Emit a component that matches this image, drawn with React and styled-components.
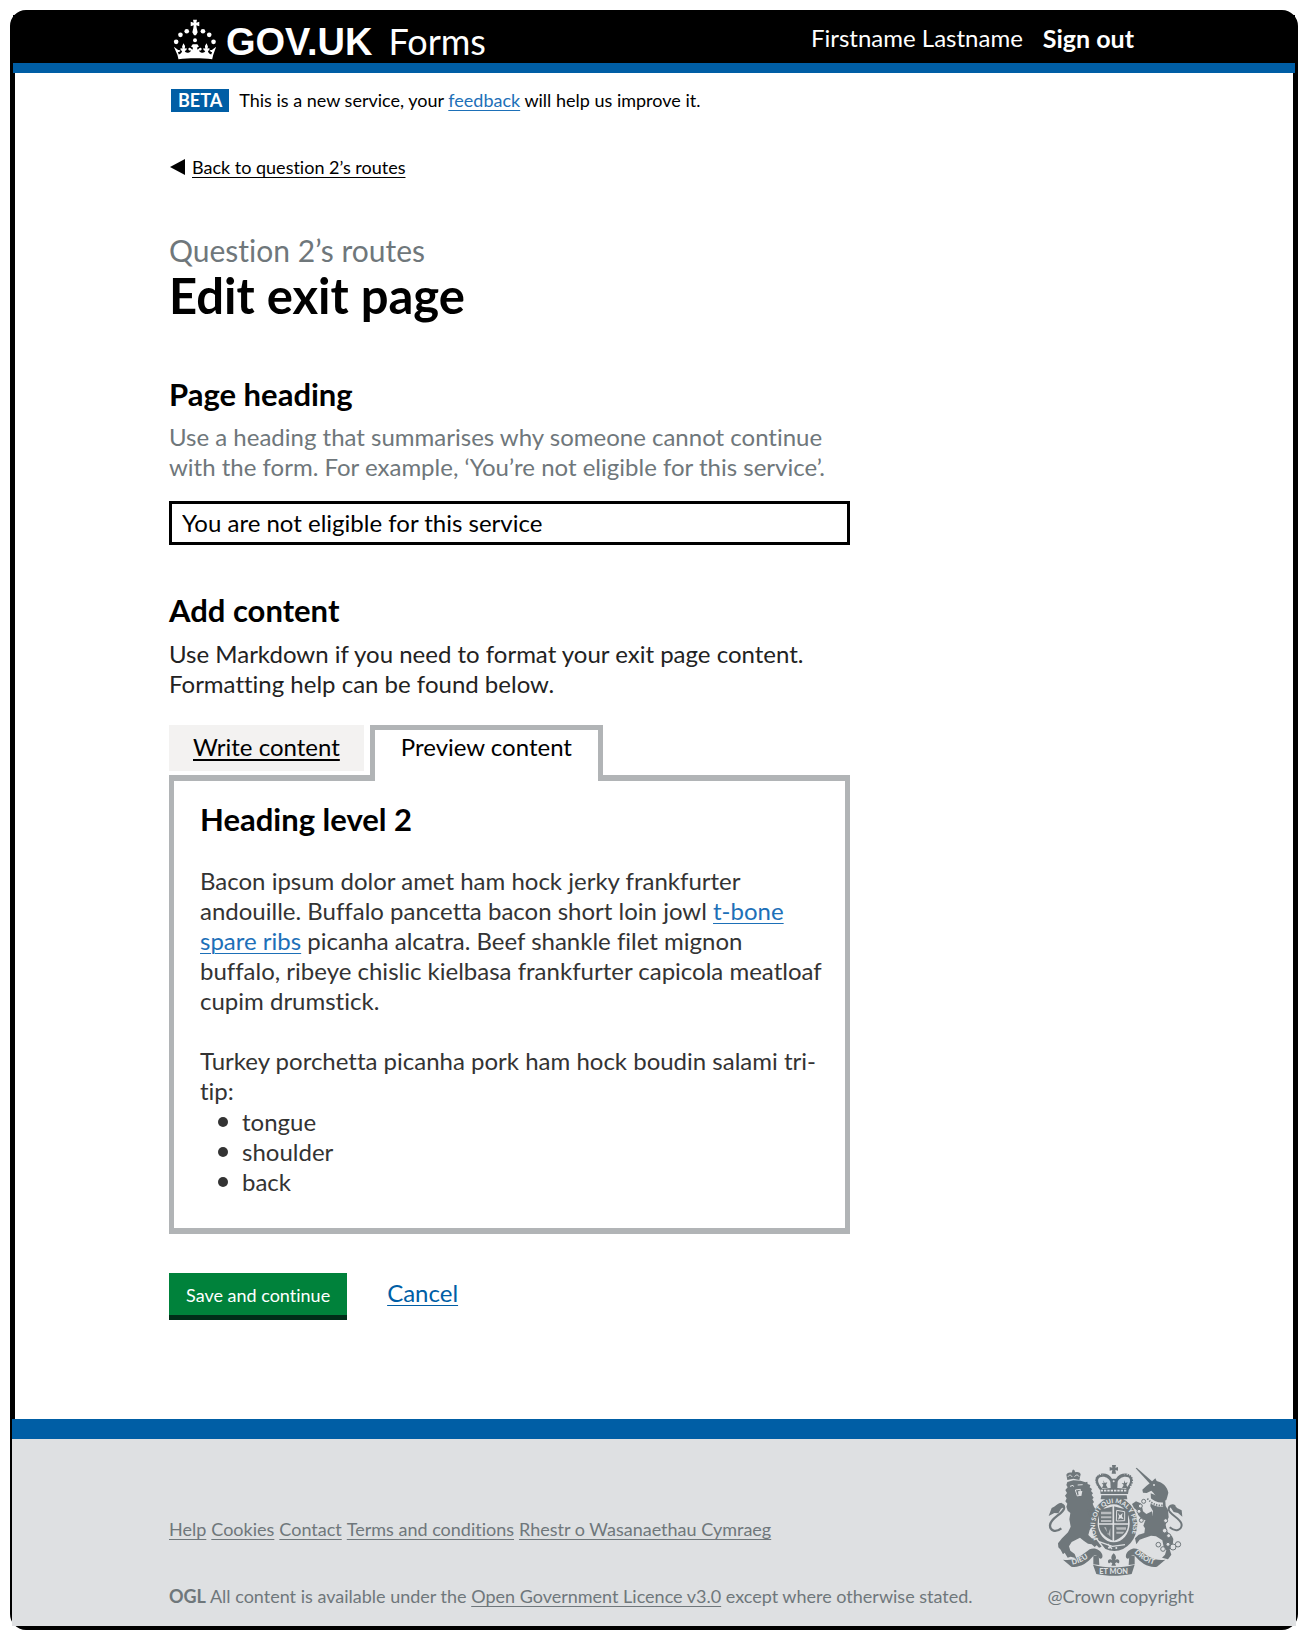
import React, { useState } from "react";
import styled, { createGlobalStyle } from "styled-components";

const GlobalStyle = createGlobalStyle`
  * { box-sizing: border-box; }
  body {
    margin: 0;
    background: #fff;
    color: #000;
    font-family: Lato, "Open Sans", "Liberation Sans", sans-serif;
    font-size: 24px;
    line-height: 30px;
    font-variant-ligatures: none;
  }
  h1, h2, p, ul { margin: 0; padding: 0; }
`;

const Frame = styled.div`
  margin: 10px 10px 11px;
  border: 5px solid #000;
  border-bottom-width: 4px;
  border-radius: 16px;
`;

const Container = styled.div`
  width: 100%;
  max-width: 970px;
  margin: 0 auto;
`;

const Header = styled.header`
  margin: 0 -2px;
  background: #000;
  border-bottom: 10px solid #005ea5;
  color: #fff;
`;

const HeaderRow = styled(Container)`
  display: flex;
  align-items: center;
  justify-content: space-between;
  height: 48px;
  padding: 0 5px 0 4px;
`;

const Brand = styled.a`
  display: flex;
  align-items: center;
  gap: 9px;
  color: inherit;
  text-decoration: none;
`;

const Crown = styled.svg`
  width: 44px;
  height: 41px;
`;

const BrandName = styled.span`
  display: flex;
  align-items: baseline;
  gap: 16px;
  padding-top: 5px;
`;

const Wordmark = styled.span`
  font: bold 38px/42px "Liberation Sans", Arial, sans-serif;
`;

const Product = styled.span`
  font-size: 36px;
  line-height: 42px;
`;

const Account = styled.nav`
  display: flex;
  gap: 20px;
  padding-bottom: 3px;
`;

const SignOut = styled.a`
  color: #fff;
  font-size: 25px;
  font-weight: 700;
  text-decoration: none;
`;

const PhaseBanner = styled.div`
  display: flex;
  gap: 10px;
  padding: 16px 0 0 2px;
  font-size: 18px;
  line-height: 23px;
`;

const PhaseTag = styled.strong`
  padding: 0 7px;
  background: #005ea5;
  color: #fff;
`;

const Link = styled.a`
  color: ${(p) => p.$color || "#1d70b8"};
  text-decoration: underline;
  text-decoration-thickness: 1px;
  text-underline-offset: 3px;
`;

const BackRow = styled.div`
  display: flex;
  align-items: center;
  gap: 6px;
  margin-top: 45px;
  padding-left: 1px;
  font-size: 18px;
  line-height: 20px;
`;

const BackArrow = styled.svg`
  width: 16px;
  height: 16px;
`;

const Main = styled.main`
  width: 100%;
  max-width: 681px;
  padding: 55px 0 99px;
`;

const Caption = styled.p`
  color: #6f777b;
  font-size: 30px;
  line-height: 36px;
`;

const Title = styled.h1`
  font-size: 49px;
  line-height: 54px;
`;

const SectionHeading = styled.h2`
  margin-top: ${(p) => p.$top}px;
  font-size: 31px;
  line-height: 36px;
`;

const Paragraph = styled.p`
  margin-top: ${(p) => p.$top}px;
  color: ${(p) => p.$color};
`;

const TextInput = styled.input`
  display: block;
  width: 100%;
  height: 44px;
  margin-top: 19px;
  padding: 0 10px 2px;
  border: 3px solid #000;
  border-radius: 0;
  color: #000;
  font: inherit;
`;

const TabList = styled.div`
  display: flex;
  gap: 6px;
  height: 50px;
  margin-top: 26px;
`;

const Tab = styled.button`
  position: relative;
  height: ${(p) => (p.$selected ? 56 : 46)}px;
  padding: ${(p) => (p.$selected ? "2px 26px 19px" : "2px 19px 4px")};
  border: 5px solid ${(p) => (p.$selected ? "#b1b4b6" : "#f3f2f1")};
  ${(p) => p.$selected && "border-bottom: 0;"}
  background: ${(p) => (p.$selected ? "#fff" : "#f3f2f1")};
  color: #000;
  font: inherit;
  white-space: nowrap;
  text-decoration: ${(p) => (p.$selected ? "none" : "underline")};
  text-decoration-thickness: 2px;
  text-underline-offset: 3px;
  cursor: pointer;
`;

const Panel = styled.section`
  padding: 20px 20px 31px 26px;
  border: 5px solid #b1b4b6;
  border-width: 6px 5px;
  color: #333;
`;

const PanelHeading = styled(SectionHeading)`
  color: #000;
`;

const BulletList = styled.ul`
  padding-top: 1px;
  list-style: none;
`;

const Bullet = styled.li`
  display: flex;
  align-items: center;
  gap: 14px;
  padding-left: 18px;
  &::before {
    content: "";
    width: 10px;
    height: 10px;
    border-radius: 50%;
    background: #333;
  }
`;

const Actions = styled.div`
  display: flex;
  align-items: baseline;
  gap: 40px;
  margin-top: 39px;
`;

const SaveButton = styled.button`
  height: 47px;
  padding: 2px 17px 0;
  border: 0;
  border-bottom: 5px solid #002d18;
  background: #00823b;
  color: #fff;
  font: inherit;
  font-size: 18px;
  cursor: pointer;
`;

const Footer = styled.footer`
  display: flex;
  align-items: flex-end;
  justify-content: space-between;
  margin: 0 -3px;
  padding: 26px 102px 20px 157px;
  border-top: 20px solid #005ea5;
  background: #dee0e2;
  color: #6f777b;
  font-size: 18px;
  line-height: 20px;
`;

const FooterText = styled.div`
  display: grid;
  gap: 47px;
`;

const FooterLinks = styled.nav`
  display: flex;
  flex-wrap: wrap;
  gap: 5px;
`;

const Copyright = styled.div`
  display: grid;
  gap: 10px;
`;

const Crest = styled.svg`
  width: 135px;
  height: 111px;
`;

const GREY = "#6f777b";

function CrownLogo() {
  return (
    <Crown viewBox="519 52 132 124" fill="#fff" aria-hidden="true">
      <path d="M579 54h12l-2 9 9-3v14l-9-3 1 8 3 13-5 9h-6l-5-9 3-13 1-8-9 3V60l9 3z" />
      <circle cx="528" cy="121" r="7" />
      <circle cx="541" cy="100" r="7" />
      <circle cx="560" cy="89" r="7" />
      <circle cx="609" cy="89" r="7" />
      <circle cx="628" cy="100" r="7" />
      <circle cx="641" cy="121" r="7" />
      <circle cx="585" cy="116" r="6" />
      <path d="M521 136l13 10c3-1 5-1 7 2-2 4-5 4-8 3l3 8c5-1 9-5 10-10-5-1-6-5-4-9l5 2-1-7 4-10 5 9-1 8 5-2c2 5 0 8-5 9 2 5 7 6 13 4 3-1 5-3 6-6-5 2-9-1-8-5s5-4 8-1l4 4 2-6-6-4 5-7h14l5 7-6 4 2 6 4-4c3-3 7-3 8 1s-3 7-8 5c1 3 3 5 6 6 6 2 11 1 13-4-5-1-7-4-5-9l5 2-1-8 5-9 4 10-1 7 5-2c2 4 1 8-4 9 1 5 5 9 10 10l3-8c-3 1-6 1-8-3 2-3 4-3 7-2l13-10-9 25-3 13c-32-4-70-4-102 0l-3-13z" />
    </Crown>
  );
}

function RoyalArms() {
  return (
    <Crest viewBox="54 45 405 333" fill={GREY} role="img" aria-label="Royal coat of arms">
      {/* lion */}
      <path d="M112 90l-3-16c3-6 10-8 15-6l6-7 7 6c6-2 13 0 15 6l-4 17-18-4z" />
      <path d="M130 59v9M126 63h9" stroke={GREY} strokeWidth="3" />
      <path d="M114 80c3-6 10-6 12 1M134 80c3-7 11-6 13 0" stroke="#dee0e2" strokeWidth="3" fill="none" />
      <path d="M112 96l18-5 22 1 14 5 6-2 1 7 8 3-2 7 7 5-3 6 6 7-4 5 6 8-4 5 5 8-4 5 3 8 10 17 10 15-8 14-7-3-8 16-9 12-4 15 10 10 13 3 11 9 6 13-8 3-7-7-6 5-9-8-11-2-13-9-11-9-9 5-16 8-8 13 4 13 13 10 5 13-17-5-9 3-9-15-5 5-7-14-7-7-1-12 12-15 18-18 8-17-4-22 3-19-8-7-4-12 3-9-6-7 4-9-5-8 6-8-5-9 7-8-4-7z" />
      <path d="M120 109l9-3 2 4M143 105l15-1M136 120l15-2-2 18-7 2z" stroke="#dee0e2" strokeWidth="3" fill="none" />
      <path d="M144 124l13-1-3 15-8-1z" fill="#dee0e2" />
      <path d="M94 235c-18 14-34 7-34-9 0-21 38-34 42-50 2-11-8-16-18-10" stroke={GREY} strokeWidth="7" fill="none" />
      <path d="M94 158c-12 2-18 11-29 16l-9 24 17-9 12 1 8-14 10-6z" />
      <path d="M172 178l24 16 10 18-12 9-12-14z" />
      {/* central crown */}
      <path d="M246 45h12l-2 8 8-2v11l-8-2 2 11h-13l2-11-8 2V51l8 2z" />
      <path d="M212 132l-2-12c-17-19-18-36-7-44 14-10 35-5 43 10h12c8-15 31-20 44-10 11 8 10 25-6 44l-2 12z" />
      <path d="M217 116c-15-17-16-29-7-34 12-6 27 2 31 13l1 19M288 116c15-17 15-29 7-34-12-6-28 2-32 13l-1 19" fill="#dee0e2" />
      <path d="M220 91l4 8 8-2-4 8 5 9h-17l4-9-5-6 6 1zM282 91l4 8 7-2-4 8 5 9h-18l5-9-6-6 7 1z" />
      <path d="M212 122h80" stroke="#dee0e2" strokeWidth="5" strokeDasharray="7 3" />
      <circle cx="251" cy="78" r="4" fill="#dee0e2" />
      <circle cx="251" cy="94" r="3" fill="#dee0e2" />
      <path d="M202 111c-17-25-3-43 17-37M301 111c17-25 3-43-17-37" stroke="#dee0e2" strokeWidth="4" strokeDasharray="3 5" fill="none" />
      <path d="M214 136h76l2 12h-80z" />
      {/* garter and shield */}
      <ellipse cx="253" cy="222" rx="69" ry="81" />
      <ellipse cx="251" cy="220" rx="48" ry="57" fill="#dee0e2" />
      <path id="garter" d="M205 267A57 69 0 1 1 301 264" fill="none" />
      <text fill="#dee0e2" fontFamily="Lato, sans-serif" fontWeight="900" fontSize="19">
        <textPath href="#garter">HONI SOIT QUI MAL Y PENSE</textPath>
      </text>
      <path d="M207 180l44-11 43 11v44c0 23-19 39-43 49-24-10-44-26-44-49z" />
      <path d="M250 168v106M205 222h90" stroke="#dee0e2" strokeWidth="5" />
      <path d="M213 185h31v8h-31zM213 199h31v6h-31zM213 210h31v6h-31zM258 232h30v7h-28zM259 245h24l-5 6h-19zM222 232h6l6 24 7-22v27z" fill="#dee0e2" opacity=".65" />
      <path d="M260 181l24 4v27l-25 1z" fill="none" stroke="#dee0e2" strokeWidth="3" />
      <path d="M264 189l6 7 8-7-2 10 5 9-10-3-7 4 3-10z" fill="#dee0e2" />
      <path d="M205 274l42 15 38-5M198 264l25 33M233 282l13 15" stroke="#dee0e2" strokeWidth="4" fill="none" />
      <circle cx="237" cy="293" r="3" fill="#dee0e2" />
      <circle cx="259" cy="294" r="3" fill="#dee0e2" />
      {/* unicorn */}
      <path d="M303 53l47 51 8-7-52-46z" transform="translate(14 2)" />
      <path d="M364 96l12-11 4 8c18 4 32 17 35 35l-3 12-3 10-6 4-12-6-12-8-9-12-6-6-14 7-11-1-2-9 12-11z" />
      <path d="M362 130l30 12 14 12 1 14 7 12 2 22-9 22 4 20 15 15 4 8-2 19-9 12 5 16-10 14-18-5 9-9 4-13-8-11-4-19-19-12-15-2-22 8-12 4-10 14-4-18 11-11 17-5 2-14-5-8 5-14 10-9 12-7 2-14-8-14 2-20z" />
      <path d="M368 204l-16 10-18-8-10-12-2-12-10-8-6-12 12-8 14 6 5 14 2 10 10 8 17-8z" />
      <path d="M352 144c15 16 28 21 47 20" stroke="#dee0e2" strokeWidth="13" fill="none" />
      <path d="M352 146c15 16 28 21 46 20" stroke={GREY} strokeWidth="5" strokeDasharray="4 4" fill="none" />
      <circle cx="372" cy="105" r="3" fill="#dee0e2" />
      <path d="M419 232c18 15 35 8 36-7 0-20-39-31-39-47 0-11 11-15 19-9" stroke={GREY} strokeWidth="6" fill="none" />
      <path d="M419 170c9-9 18-3 22 4l14 7 2 19-13-11-13-3-8-12z" />
      <g fill="#dee0e2" stroke={GREY} strokeWidth="3">
        <circle cx="341" cy="154" r="6" />
        <circle cx="331" cy="168" r="6" />
        <circle cx="327" cy="184" r="6" />
        <circle cx="334" cy="211" r="6" />
        <circle cx="407" cy="212" r="6" />
        <circle cx="404" cy="242" r="7" />
        <circle cx="416" cy="257" r="6" />
        <circle cx="385" cy="284" r="7" />
        <circle cx="399" cy="297" r="7" />
        <circle cx="414" cy="283" r="6" />
        <circle cx="429" cy="291" r="9" />
        <circle cx="444" cy="283" r="8" />
      </g>
      {/* motto ribbon */}
      <path d="M99 329c32 5 52-9 80-31 14-7 32 0 38 16 3 11-7 17-11 8-3-8-10-9-16-4-19 22-41 36-66 32z" />
      <path d="M406 329c-32 5-53-9-81-31-14-7-31 0-37 16-3 11 7 17 11 8 3-8 10-9 16-4 19 22 41 36 66 32z" />
      <path d="M189 344c38 11 84 11 125 0l-9 28c-35 7-73 7-106 0z" />
      <path d="M190 318l16-4 2 31-18-2zM314 318l-16-4-2 31 18-2z" />
      <path d="M251 310c-9 9-8 15-4 21-6-6-14-3-13 4 1 6 6 5 8 2l5 3-3 7h14l-3-7 5-3c2 3 8 4 8-2 1-7-7-10-13-4 4-6 5-12-4-21z" />
      <path id="mottoLeft" d="M127 344q31-5 60-30" fill="none" />
      <path id="mottoRight" d="M313 308q30 29 63 37" fill="none" />
      <g fill="#dee0e2" fontFamily="Lato, sans-serif" fontWeight="900" fontSize="22">
        <text><textPath href="#mottoLeft">DIEU</textPath></text>
        <text x="251" y="371" textAnchor="middle">ET MON</text>
        <text><textPath href="#mottoRight">DROIT</textPath></text>
      </g>
    </Crest>
  );
}

export default function App() {
  const [heading, setHeading] = useState("You are not eligible for this service");
  return (
    <>
      <GlobalStyle />
      <Frame>
        <Header>
          <HeaderRow>
            <Brand href="#home">
              <CrownLogo />
              <BrandName>
                <Wordmark>GOV.UK</Wordmark>
                <Product>Forms</Product>
              </BrandName>
            </Brand>
            <Account>
              <span>Firstname Lastname</span>
              <SignOut href="#sign-out">Sign out</SignOut>
            </Account>
          </HeaderRow>
        </Header>
        <Container>
          <PhaseBanner>
            <PhaseTag>BETA</PhaseTag>
            <span>
              This is a new service, your <Link href="#feedback">feedback</Link> will help us improve it.
            </span>
          </PhaseBanner>
          <BackRow>
            <BackArrow viewBox="0 0 16 16" aria-hidden="true">
              <path d="M0 8L15 0v16z" />
            </BackArrow>
            <Link $color="#000" href="#routes">Back to question 2’s routes</Link>
          </BackRow>
          <Main>
            <Caption>Question 2’s routes</Caption>
            <Title>Edit exit page</Title>
            <SectionHeading $top={54}>
              <label htmlFor="page-heading">Page heading</label>
            </SectionHeading>
            <Paragraph $top={10} $color="#6f777b" id="heading-hint">
              Use a heading that summarises why someone cannot continue with the form. For example, ‘You’re not
              eligible for this service’.
            </Paragraph>
            <TextInput
              id="page-heading"
              aria-describedby="heading-hint"
              value={heading}
              onChange={(e) => setHeading(e.target.value)}
            />
            <SectionHeading $top={47}>Add content</SectionHeading>
            <Paragraph $top={11} $color="#222">
              Use Markdown if you need to format your exit page content. Formatting help can be found below.
            </Paragraph>
            <TabList role="tablist">
              <Tab type="button" role="tab" aria-selected="false">Write content</Tab>
              <Tab type="button" role="tab" aria-selected="true" aria-controls="preview" $selected>
                Preview content
              </Tab>
            </TabList>
            <Panel id="preview" role="tabpanel">
              <PanelHeading $top={0}>Heading level 2</PanelHeading>
              <Paragraph $top={29}>
                Bacon ipsum dolor amet ham hock jerky frankfurter andouille. Buffalo pancetta bacon short loin jowl{" "}
                <Link href="#ribs">t-bone spare ribs</Link> picanha alcatra. Beef shankle filet mignon buffalo,
                ribeye chislic kielbasa frankfurter capicola meatloaf cupim drumstick.
              </Paragraph>
              <Paragraph $top={30}>Turkey porchetta picanha pork ham hock boudin salami tri-tip:</Paragraph>
              <BulletList>
                <Bullet>tongue</Bullet>
                <Bullet>shoulder</Bullet>
                <Bullet>back</Bullet>
              </BulletList>
            </Panel>
            <Actions>
              <SaveButton type="submit">Save and continue</SaveButton>
              <Link $color="#005ea5" href="#cancel">Cancel</Link>
            </Actions>
          </Main>
        </Container>
        <Footer>
          <FooterText>
            <FooterLinks>
              <Link $color={GREY} href="#help">Help</Link>
              <Link $color={GREY} href="#cookies">Cookies</Link>
              <Link $color={GREY} href="#contact">Contact</Link>
              <Link $color={GREY} href="#terms">Terms and conditions</Link>
              <Link $color={GREY} href="#cymraeg">Rhestr o Wasanaethau Cymraeg</Link>
            </FooterLinks>
            <p>
              <strong>OGL</strong> All content is available under the{" "}
              <Link $color={GREY} href="#licence">Open Government Licence v3.0</Link> except where otherwise stated.
            </p>
          </FooterText>
          <Copyright>
            <RoyalArms />
            <span>@Crown copyright</span>
          </Copyright>
        </Footer>
      </Frame>
    </>
  );
}
